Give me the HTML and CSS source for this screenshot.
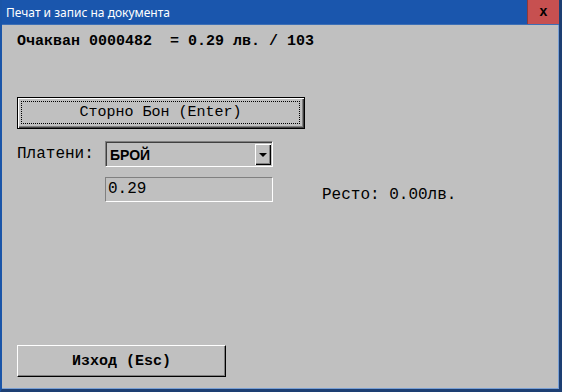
FILE: index.html
```html
<!DOCTYPE html>
<html lang="bg">
<head>
    <meta charset="UTF-8">
    <meta name="viewport" content="width=device-width, initial-scale=1.0">
    <title>Печат и запис на документа</title>
    <link rel="stylesheet" href="styles.css">
</head>
<body>
    <div class="window">
        <div class="titlebar">
            <span class="title">Печат и запис на документа</span>
            <span class="close">x</span>
        </div>

        <div class="client">
            <div class="summary">Очакван 0000482&nbsp; = 0.29 лв. / 103</div>

            <button class="btn btn-storno"><span class="focus">Сторно Бон (Enter)</span></button>

            <!-- Начин на плащане -->
            <div class="pay-row">
                <label class="pay-label">Платени:</label>
                <div class="select">
                    <span class="select-value">БРОЙ</span>
                    <span class="select-arrow"></span>
                </div>
            </div>

            <div class="amount-row">
                <div class="input">0.29</div>
                <span class="change">Ресто: 0.00лв.</span>
            </div>

            <button class="btn btn-exit">Изход (Esc)</button>
        </div>
    </div>
</body>
</html>
```

FILE: styles.css
```css
body {
    margin: 0;
    padding: 0;
    background: #c0c0c0;
    font-family: "Liberation Mono", "Courier New", monospace;
    color: #000;
}

.window {
    width: 562px;
    height: 392px;
    box-sizing: border-box;
    border-left: 2px solid #1a55a8;
    border-right: 3px solid #1d3f73;
    border-bottom: 3px solid #1d3f73;
    display: flex;
    flex-direction: column;
    background: #c0c0c0;
}

.titlebar {
    height: 24px;
    background: #1a56ad;
    display: flex;
    align-items: center;
    justify-content: space-between;
    border-bottom: 1px solid #3d6fb5;
}

.title {
    font-family: "Noto Sans", "Open Sans", sans-serif;
    font-size: 12px;
    color: #fff;
    padding-left: 4px;
}

.close {
    width: 32px;
    height: 24px;
    box-sizing: border-box;
    background: #c75050;
    border-left: 1px solid #8a3a3a;
    font-family: "Liberation Sans", Arial, sans-serif;
    font-weight: bold;
    font-size: 14px;
    line-height: 22px;
    text-align: center;
    color: #000;
}

.client {
    flex: 1;
    padding-left: 15px;
    border-right: 1px solid #7aa0d4;
    border-bottom: 1px solid #7aa0d4;
    display: flex;
    flex-direction: column;
    align-items: flex-start;
}

.summary {
    margin-top: 8px;
    font-size: 15px;
    font-weight: bold;
    line-height: 17px;
    white-space: pre;
}

.btn {
    font-family: "Liberation Mono", "Courier New", monospace;
    font-size: 15px;
    background: #c0c0c0;
    color: #000;
    height: 32px;
    padding: 0;
    cursor: pointer;
}

.btn-storno {
    margin-top: 47px;
    width: 288px;
    border: 1px solid #000;
    box-shadow: inset 1px 1px #fff, inset -1px -1px #404040, inset -2px -2px #808080;
    padding: 3px 4px 4px 3px;
    display: flex;
}

.btn-storno .focus {
    flex: 1;
    border: 1px dotted #000;
    display: flex;
    align-items: center;
    justify-content: center;
}

.pay-row {
    margin-top: 12px;
    display: flex;
    align-items: center;
}

.pay-label {
    width: 88px;
    font-size: 16px;
}

.select {
    width: 168px;
    height: 26px;
    box-sizing: border-box;
    border: 1px solid;
    border-color: #808080 #fff #fff #808080;
    box-shadow: inset 1px 1px #404040;
    display: flex;
    align-items: center;
    justify-content: space-between;
    padding: 2px 1px 1px 4px;
}

.select-value {
    font-family: "Liberation Sans", Arial, sans-serif;
    font-size: 14px;
    font-weight: bold;
}

.select-arrow {
    width: 16px;
    height: 21px;
    box-sizing: border-box;
    background: #c0c0c0;
    box-shadow: inset 1px 1px #fff, inset -1px -1px #000, inset -2px -2px #808080;
    position: relative;
}

.select-arrow::after {
    content: "";
    position: absolute;
    left: 4px;
    top: 9px;
    border-left: 4px solid transparent;
    border-right: 4px solid transparent;
    border-top: 4px solid #000;
}

.amount-row {
    margin-top: 10px;
    display: flex;
    align-items: flex-end;
}

.input {
    margin-left: 88px;
    width: 168px;
    height: 25px;
    box-sizing: border-box;
    border: 1px solid;
    border-color: #808080 #fff #fff #808080;
    padding: 1px 2px;
    font-size: 16px;
    line-height: 20px;
}

.change {
    margin-left: 49px;
    font-size: 16px;
    line-height: 14px;
}

.btn-exit {
    margin-top: 143px;
    width: 209px;
    border: 1px solid;
    border-color: #fff #000 #000 #fff;
    box-shadow: inset -1px -1px #808080;
    font-weight: bold;
}
```
